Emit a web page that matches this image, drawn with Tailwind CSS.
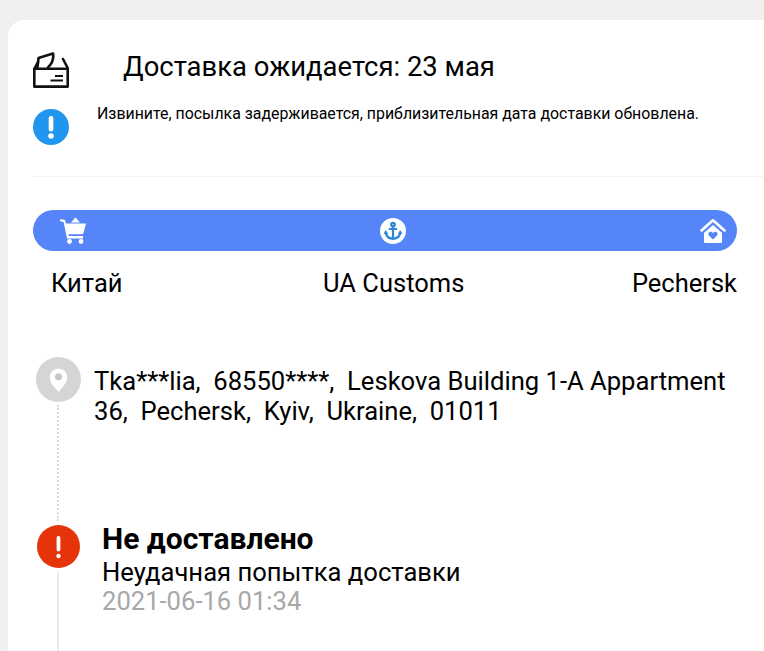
<!DOCTYPE html>
<html lang="ru">
<head>
<meta charset="utf-8">
<script src="https://cdn.jsdelivr.net/npm/@tailwindcss/browser@4"></script>
</head>
<body class="m-0 bg-[#f0f0f0]">
<div class="h-[651px] w-[764px] overflow-hidden pt-5 pl-2 font-['Roboto',sans-serif] text-black">
  <main class="h-[631px] rounded-tl-[16px] bg-white pl-[25px]">
    <section class="mr-[1px] flex h-[157px] flex-col border-b border-[#f3f3f3] pt-[32px]">
      <div class="flex h-[36px] items-start">
        <svg class="h-[36px] w-[36px] shrink-0" viewBox="0 0 36 36" fill="none" stroke="#111" stroke-width="2.6" stroke-linejoin="round" stroke-linecap="round">
          <path d="M1.3 17 L5 10 M30 7 L34.7 16"/>
          <path d="M4.5 15 L5.5 6 L20 1.5 C21 6.5 19 11.5 15 15.5"/>
          <path d="M1.3 16.8 H34.7 V34.6 H1.3 Z"/>
          <path d="M22 24 H30 M17.5 28.5 H30" stroke-width="2.2" stroke-linecap="butt"/>
        </svg>
        <h1 class="ml-[54px] -mt-[1px] whitespace-nowrap text-[27.45px] leading-[32px] font-normal">Доставка ожидается: 23 мая</h1>
      </div>
      <div class="mt-[21px] flex">
        <svg class="h-[36px] w-[36px] shrink-0" viewBox="0 0 36 36">
          <circle cx="18" cy="18" r="18" fill="#2196ee"/>
          <rect x="15.7" y="7" width="4.6" height="15.5" rx="2.3" fill="#fff"/>
          <circle cx="18" cy="27" r="2.8" fill="#fff"/>
        </svg>
        <p class="ml-[28px] -mt-[5px] whitespace-nowrap text-[15.9px] leading-[20px]">Извините, посылка задерживается, приблизительная дата доставки обновлена.</p>
      </div>
    </section>

    <section class="mr-[27px] mt-[33px]">
      <div class="flex h-[41px] items-center justify-between rounded-full bg-[#5585f8] pl-[27px] pr-[11px]">
        <svg class="h-[27px] w-[26px]" viewBox="0 0 26 27" fill="#fff">
          <path d="M0 3.5 C0 2.7 .6 2.2 1.5 2.3 L5 3 L6 6.5 H26 L23.5 16 C23.3 16.8 22.7 17.2 22 17.2 H8.5 L8.9 19 H23 V21.4 H7 L3.6 5 L1.2 4.6 C.5 4.4 0 4.1 0 3.5 Z"/>
          <path d="M11 5.5 L15.5 .5 L20 5.5 Z"/>
          <circle cx="9.5" cy="24.5" r="2.4"/><circle cx="21" cy="24.5" r="2.4"/>
        </svg>
        <svg class="h-[26px] w-[26px]" viewBox="0 0 26 26">
          <circle cx="13" cy="13" r="13" fill="#fff"/>
          <g fill="none" stroke="#2f86d6" stroke-width="2.2" stroke-linecap="round">
            <circle cx="13" cy="6.6" r="1.8"/>
            <path d="M13 8.5 V20.5 M9.7 11 H16.3"/>
            <path d="M5.7 14.2 C6 18.3 9 20.5 13 20.8 C17 20.5 20 18.3 20.3 14.2"/>
          </g>
          <path d="M3.6 16 L5.8 12.2 L8.2 16 Z M17.8 16 L20.2 12.2 L22.4 16 Z" fill="#2f86d6"/>
        </svg>
        <svg class="h-[26px] w-[26px]" viewBox="0 0 26 26">
          <path d="M1.5 12.5 L13 2.3 L24.5 12.5" fill="none" stroke="#fff" stroke-width="2.6" stroke-linecap="round" stroke-linejoin="round"/>
          <path d="M13 7 L22 14.8 V23.5 C22 24.6 21.4 25 20.5 25 H5.5 C4.6 25 4 24.6 4 23.5 V14.8 Z" fill="#fff"/>
          <path d="M13 21.5 L8.9 17.4 C7.2 15.3 9.9 12.7 12 14.2 L13 15 L14 14.2 C16.1 12.7 18.8 15.3 17.1 17.4 Z" fill="#5585f8"/>
        </svg>
      </div>
      <div class="mt-[16px] flex justify-between pl-[18px] text-[25.5px] leading-[32px]">
        <span>Китай</span>
        <span class="ml-[33px]">UA Customs</span>
        <span>Pechersk</span>
      </div>
    </section>

    <section class="mt-[58px] flex flex-col">
      <div class="flex">
        <div class="flex w-[51px] shrink-0 flex-col items-center">
          <div class="flex h-[45px] w-[45px] items-center justify-center rounded-full bg-[#d3d6d3]">
            <svg class="h-[24px] w-[21px]" viewBox="0 0 22 26">
              <path d="M11 26 C7.5 21.5 1.5 16.5 1.5 10 A9.5 9.5 0 0 1 20.5 10 C20.5 16.5 14.5 21.5 11 26 Z" fill="#fff"/>
              <circle cx="11" cy="9.5" r="3.8" fill="#c4c8c4"/>
            </svg>
          </div>
          <div class="mt-[3px] mb-[4px] -ml-[1px] h-[116px] border-l-2 border-dotted border-[#dcdcdc]"></div>
        </div>
        <p class="ml-[10px] w-[640px] pt-[9px] text-[25.6px] leading-[30px]">Tka***lia,&nbsp; 68550****,&nbsp; Leskova Building 1-A Appartment 36,&nbsp; Pechersk,&nbsp; Kyiv,&nbsp; Ukraine,&nbsp; 01011</p>
      </div>
      <div class="flex">
        <div class="flex w-[51px] shrink-0 flex-col items-center">
          <svg class="h-[43px] w-[43px] shrink-0" viewBox="0 0 43 43">
            <circle cx="21.5" cy="21.5" r="21.5" fill="#e6340a"/>
            <rect x="19.6" y="11" width="3.8" height="15.5" rx="1.9" fill="#fff"/>
            <circle cx="21.5" cy="31" r="2.2" fill="#fff"/>
          </svg>
          <div class="mt-[3px] -ml-[1px] h-[80px] w-[2px] bg-[#ebebeb]"></div>
        </div>
        <div class="ml-[18px] -mt-[3px] flex flex-col">
          <strong class="text-[30px] leading-[34px] font-bold">Не доставлено</strong>
          <span class="text-[25.6px] leading-[32px]">Неудачная попытка доставки</span>
          <span class="text-[25.6px] leading-[26px] text-[#a8a8a8]">2021-06-16 01:34</span>
        </div>
      </div>
    </section>
  </main>
</div>
</body>
</html>
